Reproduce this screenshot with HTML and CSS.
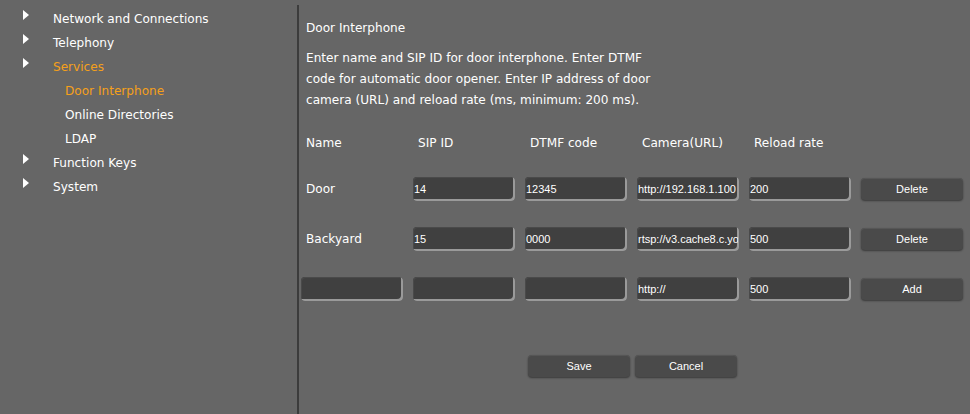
FILE: index.html
```html
<!DOCTYPE html>
<html>
<head>
<meta charset="utf-8">
<link rel="stylesheet" href="styles.css">
</head>
<body>
<div class="page">
  <nav class="sidebar">
    <div class="item"><span class="arrow"></span><span class="label">Network and Connections</span></div>
    <div class="item"><span class="arrow"></span><span class="label">Telephony</span></div>
    <div class="item active"><span class="arrow"></span><span class="label">Services</span></div>
    <div class="sub active">Door Interphone</div>
    <div class="sub">Online Directories</div>
    <div class="sub">LDAP</div>
    <div class="item"><span class="arrow"></span><span class="label">Function Keys</span></div>
    <div class="item"><span class="arrow"></span><span class="label">System</span></div>
  </nav>
  <main class="content">
    <h1 class="title">Door Interphone</h1>
    <p class="desc">Enter name and SIP ID for door interphone. Enter DTMF<br>code for automatic door opener. Enter IP address of door<br>camera (URL) and reload rate (ms, minimum: 200 ms).</p>
    <div class="grid">
      <div class="head">Name</div>
      <div class="head">SIP ID</div>
      <div class="head">DTMF code</div>
      <div class="head">Camera(URL)</div>
      <div class="head">Reload rate</div>
      <div></div>

      <div class="name">Door</div>
      <input class="field" value="14">
      <input class="field" value="12345">
      <input class="field" value="http://192.168.1.100">
      <input class="field" value="200">
      <button class="btn">Delete</button>

      <div class="name">Backyard</div>
      <input class="field" value="15">
      <input class="field" value="0000">
      <input class="field" value="rtsp://v3.cache8.c.youtube.com">
      <input class="field" value="500">
      <button class="btn">Delete</button>

      <input class="field" value="">
      <input class="field" value="">
      <input class="field" value="">
      <input class="field" value="http://">
      <input class="field" value="500">
      <button class="btn">Add</button>
    </div>
    <div class="actions">
      <button class="btn">Save</button>
      <button class="btn">Cancel</button>
    </div>
  </main>
</div>
</body>
</html>
```
FILE: styles.css
```css
html, body {
  margin: 0;
  padding: 0;
  background: #666666;
  height: 100%;
}
body {
  font-family: "DejaVu Sans", Verdana, sans-serif;
  font-size: 12.1px;
  color: #ffffff;
}
.page {
  display: flex;
  height: 414px;
}
.sidebar {
  width: 297px;
  flex: none;
  padding-top: 7px;
  box-sizing: border-box;
}
.item, .sub {
  height: 24px;
  line-height: 24px;
  display: flex;
  align-items: center;
  white-space: nowrap;
}
.arrow {
  width: 0;
  height: 0;
  border-top: 5px solid transparent;
  border-bottom: 5px solid transparent;
  border-left: 6px solid #ffffff;
  margin-left: 23px;
  margin-right: 24px;
  margin-top: -8px;
}
.sub {
  padding-left: 65px;
}
.active {
  color: #f5a01a;
}
.content {
  flex: 1;
  margin-top: 5px;
  border-left: 2px solid #3c3c3c;
  padding-left: 2px;
}
.title {
  font-size: 12.1px;
  font-weight: normal;
  margin: 0;
  padding: 14px 0 0 5px;
  line-height: 18px;
}
.desc {
  margin: 11px 0 0 0;
  padding-left: 5px;
  line-height: 21px;
}
.grid {
  display: grid;
  grid-template-columns: repeat(6, 102px);
  grid-template-rows: 21px 24px 24px 24px;
  column-gap: 10px;
  row-gap: 26px;
  align-items: center;
  margin-top: 19px;
}
.head, .name {
  padding-left: 5px;
  white-space: nowrap;
}
.head {
  align-self: end;
  line-height: 18px;
  margin-bottom: -1px;
}
.name {
  line-height: 18px;
}
.field {
  box-sizing: border-box;
  width: 102px;
  height: 24px;
  margin: 0;
  padding: 0 1px 1px 1px;
  background: #404040;
  border: none;
  border-radius: 4px;
  box-shadow: inset -2px -2px 0 #9a9a9a, inset 1px 1px 0 #4a4a4a;
  color: #ffffff;
  font-family: "Liberation Sans", Arial, sans-serif;
  font-size: 11px;
  outline: none;
}
.btn {
  box-sizing: border-box;
  width: 102px;
  height: 22px;
  margin: 0;
  padding: 0;
  background: #4a4a4a;
  border: none;
  border-radius: 4px;
  box-shadow: 0 1px 2px rgba(0,0,0,0.45), inset 0 1px 0 #565656;
  color: #ffffff;
  font-family: "Liberation Sans", Arial, sans-serif;
  font-size: 11px;
  align-self: start;
  margin-top: 1px;
}
.actions {
  display: flex;
  gap: 5px;
  margin-top: 54px;
  padding-left: 227px;
}
.actions .btn {
  margin-top: 0;
}
```
